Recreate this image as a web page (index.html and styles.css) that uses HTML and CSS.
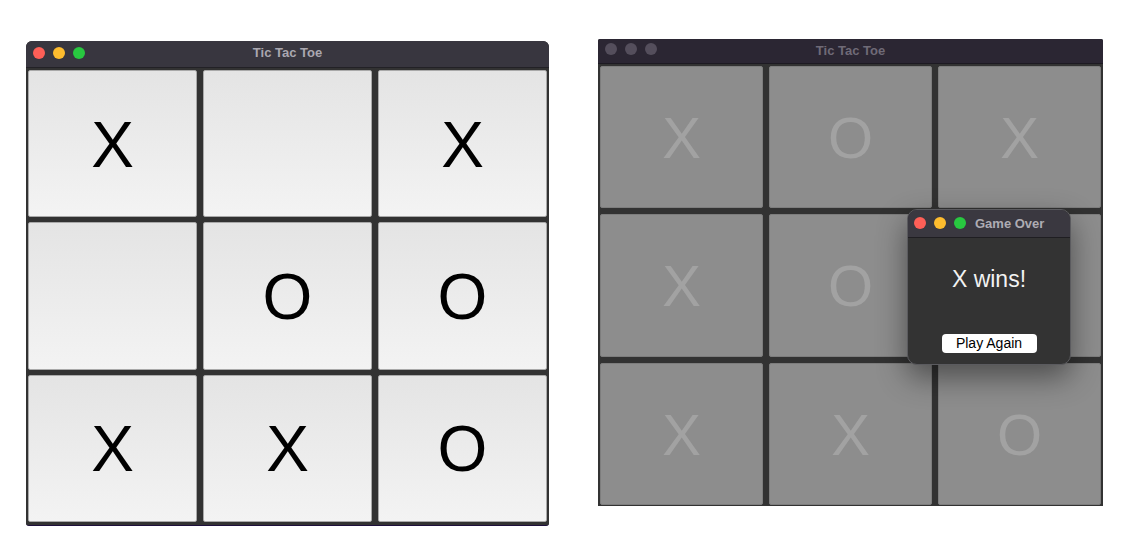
FILE: index.html
```html
<!DOCTYPE html>
<html>
<head>
<meta charset="utf-8">
<link rel="stylesheet" href="styles.css">
</head>
<body>
<div class="page">
  <div class="window win-left">
    <div class="titlebar">
      <div class="lights">
        <span class="light red"></span><span class="light yellow"></span><span class="light green"></span>
      </div>
      <div class="title">Tic Tac Toe</div>
    </div>
    <div class="board">
      <div class="cell">X</div><div class="cell"></div><div class="cell">X</div>
      <div class="cell"></div><div class="cell">O</div><div class="cell">O</div>
      <div class="cell">X</div><div class="cell">X</div><div class="cell">O</div>
    </div>
  </div>

  <div class="window win-right">
    <div class="titlebar dim">
      <div class="lights">
        <span class="light off"></span><span class="light off"></span><span class="light off"></span>
      </div>
      <div class="title">Tic Tac Toe</div>
    </div>
    <div class="board dimboard">
      <div class="cell">X</div><div class="cell">O</div><div class="cell">X</div>
      <div class="cell">X</div><div class="cell">O</div><div class="cell">O</div>
      <div class="cell">X</div><div class="cell">X</div><div class="cell">O</div>
    </div>
    <div class="dialog">
      <div class="dlg-bar">
        <div class="lights">
          <span class="light red"></span><span class="light yellow"></span><span class="light green"></span>
        </div>
        <div class="dlg-title">Game Over</div>
      </div>
      <div class="dlg-body">
        <div class="msg">X wins!</div>
        <button class="btn">Play Again</button>
      </div>
    </div>
  </div>
</div>
</body>
</html>
```

FILE: styles.css
```css
* { box-sizing: border-box; }
html, body {
  margin: 0;
  padding: 0;
  background: #ffffff;
  font-family: "Liberation Sans", Arial, Helvetica, sans-serif;
}
.page {
  display: flex;
  align-items: flex-start;
  padding-left: 26px;
  width: 1148px;
  height: 539px;
  overflow: hidden;
}
.window {
  display: flex;
  flex-direction: column;
  background: #333333;
  border-radius: 6px 6px 3px 3px;
  overflow: hidden;
}
.win-left {
  width: 523px;
  height: 485px;
  margin-top: 41px;
  border-bottom: 1px solid #1e0f3c;
}
.win-right {
  position: relative;
  overflow: visible;
  width: 505px;
  height: 467px;
  margin-top: 39px;
  margin-left: 49px;
  border-radius: 2px;
}
.titlebar {
  position: relative;
  height: 27px;
  flex: none;
  background: #38363f;
  border-bottom: 1px solid #222126;
  display: flex;
  align-items: center;
  justify-content: center;
  padding-bottom: 3px;
}
.titlebar.dim {
  height: 25px;
  background: #2b2633;
  border-bottom-color: #1d1a22;
  border-radius: 2px 2px 0 0;
  padding-bottom: 2px;
}
.lights {
  position: absolute;
  left: 7px;
  top: 6px;
  display: flex;
  gap: 8px;
}
.light {
  width: 12px;
  height: 12px;
  border-radius: 50%;
  display: block;
}
.red { background: #fe5f57; }
.yellow { background: #febc2e; }
.green { background: #28c840; }
.off { background: #544e5c; }
.dim .lights { top: 4px; }
.title {
  font-weight: bold;
  font-size: 13px;
  color: #aaa7b0;
}
.dim .title { color: #6f6a77; }
.board {
  flex: 1;
  display: grid;
  grid-template-columns: repeat(3, 1fr);
  grid-template-rows: repeat(3, 1fr);
  gap: 5px 6px;
  padding: 2px 2px 3px 2px;
  background: #323232;
}
.cell {
  border: 1px solid #a9a9a9;
  border-radius: 2px;
  background: linear-gradient(#e4e4e4, #f3f3f3);
  display: flex;
  align-items: center;
  justify-content: center;
  font-size: 64px;
  color: #000;
  line-height: 1;
  padding-top: 2px;
}
.dimboard {
  gap: 6px 6px;
  padding: 2px 2px 1px 2px;
}
.dimboard .cell {
  background: #8d8d8d;
  border-color: #7d7d7d;
  color: #a2a2a2;
  font-size: 58px;
}
.dialog {
  position: absolute;
  left: 309px;
  top: 170px;
  width: 164px;
  height: 156px;
  border-radius: 10px;
  background: #333333;
  border: 1px solid #5b5b5f;
  box-shadow: 0 12px 30px rgba(0,0,0,0.45);
  display: flex;
  flex-direction: column;
  overflow: hidden;
}
.dlg-bar {
  position: relative;
  height: 28px;
  flex: none;
  background: #3a3840;
  border-bottom: 1px solid #1f1e22;
  display: flex;
  align-items: center;
  padding-left: 67px;
}
.dlg-bar .lights { top: 7px; left: 6px; }
.dlg-title {
  font-weight: bold;
  font-size: 13px;
  color: #aeacb3;
}
.dlg-body {
  flex: 1;
  display: flex;
  flex-direction: column;
  align-items: center;
  padding-top: 28px;
}
.msg {
  font-size: 23px;
  color: #f2f2f2;
}
.btn {
  margin-top: 41px;
  width: 95px;
  height: 19px;
  border: none;
  border-radius: 4px;
  background: #ffffff;
  font-family: "Liberation Sans", Arial, sans-serif;
  font-size: 14px;
  color: #000;
  padding: 0;
  line-height: 19px;
}
```
